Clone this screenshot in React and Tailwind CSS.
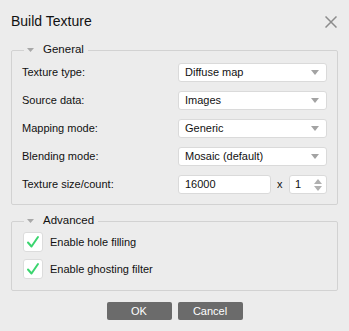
import React from "react";

const font = { fontFamily: '"Liberation Sans", Arial, sans-serif' };

function Caret() {
  return (
    <svg width="8" height="5" viewBox="0 0 8 5" className="shrink-0">
      <path d="M0 0 L8 0 L4 5 Z" fill="#a3a3a3" />
    </svg>
  );
}

function Select({ value }) {
  return (
    <div className="flex h-[19px] w-[149px] items-center justify-between rounded-[3px] border border-[#dadada] bg-white pl-[6px] pr-[7px] text-[11px] text-[#111]">
      <span>{value}</span>
      <Caret />
    </div>
  );
}

// legend sits inside the fieldset padding, so offset is passed per group
function Legend({ label, className }) {
  return (
    <legend className={"flex h-[14px] items-center gap-[9px] px-[3px] text-[11.5px] text-[#111] " + className}>
      <svg width="7" height="4" viewBox="0 0 7 4">
        <path d="M0 0 L7 0 L3.5 4 Z" fill="#a8a8a8" />
      </svg>
      <span className="pr-[1px]">{label}</span>
    </legend>
  );
}

function Row({ label, children }) {
  return (
    <div className="flex h-[19px] items-center justify-between">
      <span className="text-[11px] text-[#111]">{label}</span>
      {children}
    </div>
  );
}

function Check({ label }) {
  return (
    <div className="flex items-center gap-[7px]">
      <div className="flex h-[20px] w-[20px] items-center justify-center rounded-[3px] border border-[#dcdcdc] bg-white">
        <svg width="14" height="14" viewBox="0 0 14 14">
          <path
            d="M2 7.5 L5.5 11.5 L12 2"
            fill="none"
            stroke="#3bd56f"
            strokeWidth="2"
            strokeLinecap="round"
            strokeLinejoin="round"
          />
        </svg>
      </div>
      <span className="text-[11px] text-[#111]">{label}</span>
    </div>
  );
}

export default function App() {
  return (
    <div className="h-[331px] w-[349px] bg-[#ececec]" style={font}>
      <div className="flex h-[43px] items-center justify-between pl-[11px] pr-[12px]">
        <h1 className="text-[14px] text-[#111]">Build Texture</h1>
        <svg width="12" height="12" viewBox="0 0 12 12">
          <path d="M0.5 0.5 L11.5 11.5 M11.5 0.5 L0.5 11.5" stroke="#8c8c8c" strokeWidth="1.5" />
        </svg>
      </div>

      <fieldset className="mx-[11px] rounded-[2px] border border-[#d2d2d2] px-[10px] pb-[10px] pt-[6px]">
        <Legend label="General" className="ml-[2px]" />
        <div className="flex flex-col gap-[9px]">
          <Row label="Texture type:">
            <Select value="Diffuse map" />
          </Row>
          <Row label="Source data:">
            <Select value="Images" />
          </Row>
          <Row label="Mapping mode:">
            <Select value="Generic" />
          </Row>
          <Row label="Blending mode:">
            <Select value="Mosaic (default)" />
          </Row>
          <Row label="Texture size/count:">
            <div className="flex w-[149px] items-center">
              <div className="flex h-[19px] w-[93px] items-center rounded-[3px] border border-[#dadada] bg-white pl-[6px] text-[11px] text-[#111]">
                16000
              </div>
              <span className="ml-[6px] text-[11px] text-[#111]">x</span>
              <div className="ml-auto flex h-[19px] w-[38px] items-center justify-between rounded-[3px] border border-[#dadada] bg-white pl-[5px] pr-[4px] text-[11px] text-[#111]">
                <span>1</span>
                <div className="flex flex-col gap-[2px]">
                  <svg width="8" height="5" viewBox="0 0 8 5">
                    <path d="M0 5 L8 5 L4 0 Z" fill="#b0b0b0" />
                  </svg>
                  <svg width="8" height="5" viewBox="0 0 8 5">
                    <path d="M0 0 L8 0 L4 5 Z" fill="#b0b0b0" />
                  </svg>
                </div>
              </div>
            </div>
          </Row>
        </div>
      </fieldset>

      <fieldset className="mx-[11px] mt-[9px] rounded-[2px] border border-[#d2d2d2] pb-[11px] pl-[11px] pt-[4px]">
        <Legend label="Advanced" className="ml-[1px]" />
        <div className="flex flex-col gap-[7px]">
          <Check label="Enable hole filling" />
          <Check label="Enable ghosting filter" />
        </div>
      </fieldset>

      <div className="mt-[11px] flex justify-center gap-[6px]">
        <button className="h-[18px] w-[65px] rounded-[2px] bg-[#6b6b6b] text-[11px] text-white">
          OK
        </button>
        <button className="h-[18px] w-[65px] rounded-[2px] bg-[#6b6b6b] text-[11px] text-white">
          Cancel
        </button>
      </div>
    </div>
  );
}
